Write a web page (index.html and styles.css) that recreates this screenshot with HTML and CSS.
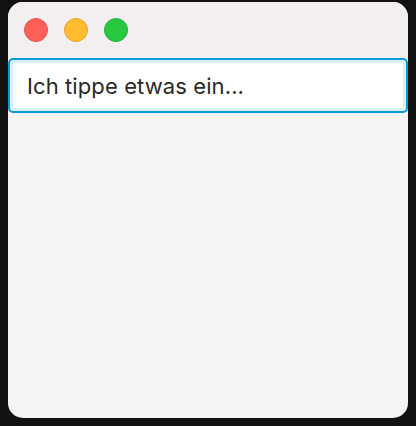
FILE: index.html
```html
<!DOCTYPE html>
<html lang="de">
<head>
    <meta charset="UTF-8">
    <meta name="viewport" content="width=device-width, initial-scale=1.0">
    <title>Eingabe</title>
    <link rel="stylesheet" href="styles.css">
</head>
<body>
    <div class="window">
        <div class="titlebar">
            <span class="dot close"></span>
            <span class="dot minimize"></span>
            <span class="dot zoom"></span>
        </div>
        <div class="content">
            <div class="field">Ich tippe etwas ein...</div>
        </div>
    </div>
</body>
</html>
```

FILE: styles.css
```css
body {
    margin: 0;
    padding: 0;
    background-color: #121212;
    font-family: Inter, "Liberation Sans", Arial, sans-serif;
}
.window {
    width: 400px;
    height: 416px;
    margin: 2px 8px 8px 8px;
    border-radius: 15px;
    overflow: hidden;
    background-color: #f4f4f4;
}
.titlebar {
    display: flex;
    align-items: center;
    gap: 16px;
    height: 56px;
    padding-left: 16px;
    background-color: #f3eef0;
}
.dot {
    width: 24px;
    height: 24px;
    border-radius: 50%;
    box-sizing: border-box;
}
.close {
    background-color: #fe5f57;
    border: 1px solid #e9524b;
}
.minimize {
    background-color: #febc2e;
    border: 1px solid #e4a628;
}
.zoom {
    background-color: #28c840;
    border: 1px solid #22b236;
}
.field {
    display: flex;
    align-items: center;
    box-sizing: border-box;
    height: 55px;
    padding-left: 17px;
    border: 2px solid #0a9ad6;
    border-radius: 5px;
    background-color: #ffffff;
    box-shadow: inset 0 0 0 3px #d6f1f9;
    color: #2a2a2a;
    font-size: 22px;
    letter-spacing: 0.1px;
}
```
